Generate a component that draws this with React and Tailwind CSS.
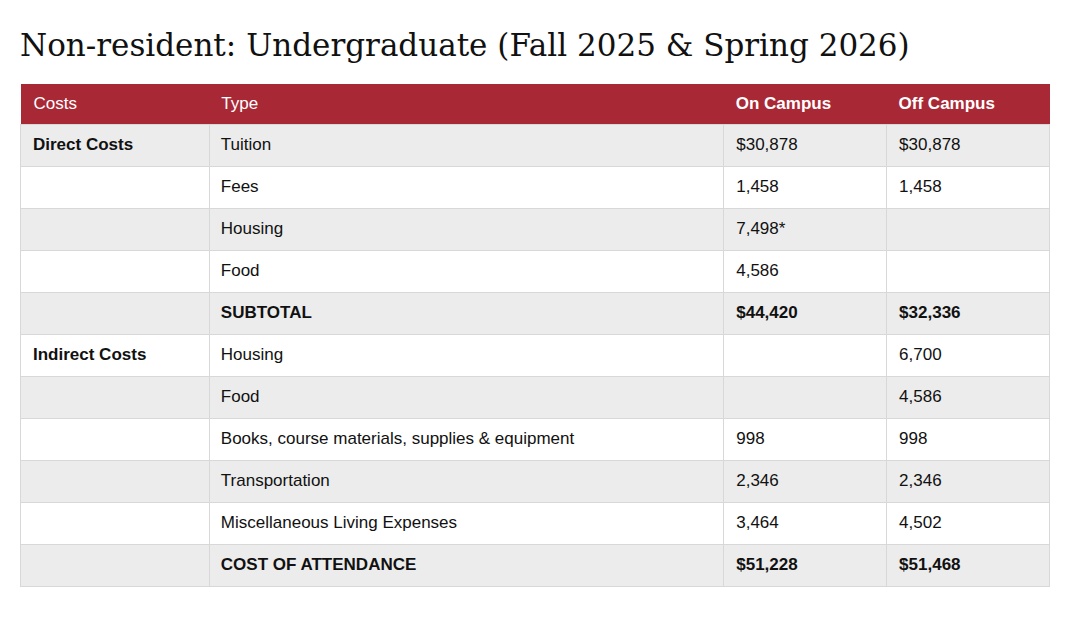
import React from "react";

const rows = [
  { cost: "Direct Costs", type: "Tuition", on: "$30,878", off: "$30,878" },
  { cost: "", type: "Fees", on: "1,458", off: "1,458" },
  { cost: "", type: "Housing", on: "7,498*", off: "" },
  { cost: "", type: "Food", on: "4,586", off: "" },
  { cost: "", type: "SUBTOTAL", on: "$44,420", off: "$32,336", bold: true },
  { cost: "Indirect Costs", type: "Housing", on: "", off: "6,700" },
  { cost: "", type: "Food", on: "", off: "4,586" },
  { cost: "", type: "Books, course materials, supplies & equipment", on: "998", off: "998" },
  { cost: "", type: "Transportation", on: "2,346", off: "2,346" },
  { cost: "", type: "Miscellaneous Living Expenses", on: "3,464", off: "4,502" },
  { cost: "", type: "COST OF ATTENDANCE", on: "$51,228", off: "$51,468", bold: true },
];

export default function App() {
  return (
    <div className="min-h-screen bg-white px-5 pt-[23px] text-[#111]">
      <h1 className="font-['DejaVu_Serif',serif] text-[31px] leading-[44px] text-[#111] mb-[17px]">
        Non-resident: Undergraduate (Fall 2025 &amp; Spring 2026)
      </h1>

      <table className="w-[1030px] border-collapse font-['Liberation_Sans',Arial,sans-serif] text-[17px] text-[#111]">
        <thead>
          <tr className="bg-[#a82835] text-white h-[40px]">
            <th className="w-[189px] px-[13px] text-left font-normal">Costs</th>
            <th className="w-[515px] px-[12px] text-left font-normal">Type</th>
            <th className="w-[163px] px-[12px] text-left font-bold">On Campus</th>
            <th className="w-[163px] px-[12px] text-left font-bold">Off Campus</th>
          </tr>
        </thead>
        <tbody>
          {rows.map((r, i) => (
            <tr key={i} className={i % 2 === 0 ? "bg-[#ececec] h-[42px]" : "bg-white h-[42px]"}>
              <td className="border border-[#d8d8d8] px-[12px] font-bold">{r.cost}</td>
              <td className={"border border-[#d8d8d8] px-[11px] " + (r.bold ? "font-bold" : "")}>{r.type}</td>
              <td className={"border border-[#d8d8d8] px-[12px] " + (r.bold ? "font-bold" : "")}>{r.on}</td>
              <td className={"border border-[#d8d8d8] px-[12px] " + (r.bold ? "font-bold" : "")}>{r.off}</td>
            </tr>
          ))}
        </tbody>
      </table>
    </div>
  );
}
